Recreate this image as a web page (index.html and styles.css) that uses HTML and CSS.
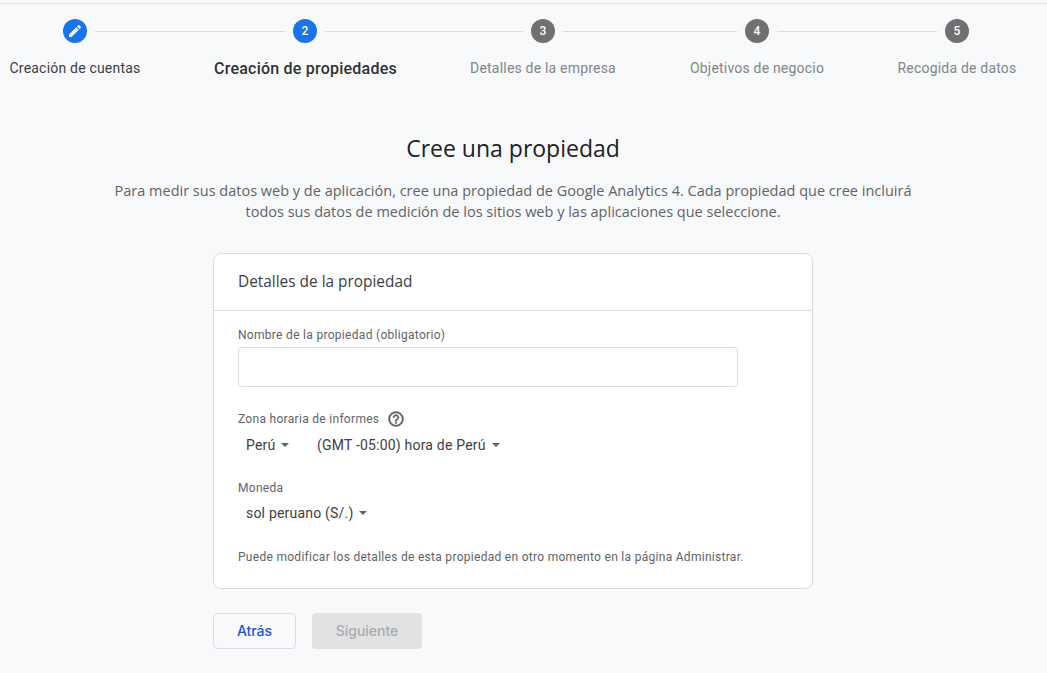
FILE: index.html
```html
<!DOCTYPE html>
<html lang="es">
<head>
    <meta charset="UTF-8">
    <title>Cree una propiedad</title>
    <link rel="stylesheet" href="styles.css">
</head>
<body>
    <div class="stepper">
        <div class="track">
            <span class="dot dot-active">
                <svg class="pencil" viewBox="0 0 24 24" width="16" height="16"><path d="M3 17.25V21h3.75L17.81 9.94l-3.75-3.75L3 17.25zM20.71 7.04a1 1 0 0 0 0-1.41l-2.34-2.34a1 1 0 0 0-1.41 0l-1.83 1.83 3.75 3.75 1.83-1.83z"/></svg>
            </span>
            <span class="line line-1"></span>
            <span class="dot dot-active">2</span>
            <span class="line line-2"></span>
            <span class="dot">3</span>
            <span class="line line-3"></span>
            <span class="dot">4</span>
            <span class="line line-4"></span>
            <span class="dot">5</span>
        </div>
        <div class="labels">
            <span class="label label-done">Creación de cuentas</span>
            <span class="label label-current">Creación de propiedades</span>
            <span class="label">Detalles de la empresa</span>
            <span class="label">Objetivos de negocio</span>
            <span class="label">Recogida de datos</span>
        </div>
    </div>

    <div class="intro">
        <h1>Cree una propiedad</h1>
        <p>Para medir sus datos web y de aplicación, cree una propiedad de Google Analytics 4. Cada propiedad que cree incluirá<br>todos sus datos de medición de los sitios web y las aplicaciones que seleccione.</p>
    </div>

    <div class="main">
        <div class="card">
            <div class="card-header">Detalles de la propiedad</div>
            <div class="card-body">
                <label class="field-label" for="nombre">Nombre de la propiedad (obligatorio)</label>
                <input class="text-input" id="nombre" type="text">

                <div class="field-label tz-label">
                    Zona horaria de informes
                    <svg class="help" viewBox="0 0 24 24" width="18" height="18"><path d="M11 18h2v-2h-2v2zm1-16C6.48 2 2 6.48 2 12s4.48 10 10 10 10-4.48 10-10S17.52 2 12 2zm0 18c-4.41 0-8-3.59-8-8s3.59-8 8-8 8 3.59 8 8-3.59 8-8 8zm0-14c-2.21 0-4 1.79-4 4h2c0-1.1.9-2 2-2s2 .9 2 2c0 2-3 1.75-3 5h2c0-2.25 3-2.5 3-5 0-2.21-1.79-4-4-4z"/></svg>
                </div>
                <div class="selects">
                    <span class="select select-country">Perú<i class="caret"></i></span>
                    <span class="select">(GMT -05:00) hora de Perú<i class="caret"></i></span>
                </div>

                <div class="field-label currency-label">Moneda</div>
                <div class="selects">
                    <span class="select">sol peruano (S/.)<i class="caret"></i></span>
                </div>

                <p class="hint">Puede modificar los detalles de esta propiedad en otro momento en la página Administrar.</p>
            </div>
        </div>

        <div class="actions">
            <button class="btn btn-back">Atrás</button>
            <button class="btn btn-next" disabled>Siguiente</button>
        </div>
    </div>
</body>
</html>
```

FILE: styles.css
```css
html, body {
    height: 100%;
}
body {
    margin: 0;
    background: #f8f9fa;
    border-top: 3px solid transparent;
    box-sizing: border-box;
    box-shadow: inset 0 1px 0 #e0e0e0;
    overflow: hidden;
    font-family: Roboto, Arial, sans-serif;
    color: #3c4043;
}
.stepper {
    padding-top: 16px;
}
.track {
    display: flex;
    align-items: center;
    padding-left: 63px;
}
.dot {
    display: flex;
    align-items: center;
    justify-content: center;
    flex: none;
    width: 24px;
    height: 24px;
    border-radius: 50%;
    background: #707070;
    color: #fff;
    font-size: 12px;
    font-weight: 500;
}
.dot-active {
    background: #1a73e8;
}
.pencil {
    fill: #fff;
}
.line {
    flex: none;
    height: 1px;
    margin: 0 8px;
    background: #dadce0;
}
.line-1 { width: 190px; }
.line-2 { width: 198px; }
.line-3 { width: 174px; }
.line-4 { width: 160px; }
.labels {
    display: grid;
    grid-template-columns: 150px 311px 164px 264px 136px;
    margin-top: 15px;
}
.label {
    text-align: center;
    font-size: 14px;
    line-height: 20px;
    letter-spacing: 0.2px;
    color: #80868b;
    white-space: nowrap;
}
.label-done {
    color: #3c4043;
}
.label-current {
    color: #303134;
    font-size: 16px;
    font-weight: 500;
    letter-spacing: 0.22px;
    line-height: 22px;
}
.intro {
    text-align: center;
    width: 1026px;
}
.intro h1 {
    margin: 52px 0 0 0;
    font-family: "Open Sans", Arial, sans-serif;
    font-size: 23px;
    line-height: 32px;
    font-weight: 400;
    color: #202124;
}
.intro p {
    margin: 16px 0 0 0;
    font-family: "Open Sans", Arial, sans-serif;
    font-size: 14.5px;
    line-height: 21px;
    font-weight: 500;
    color: #5f6368;
}
.main {
    width: 600px;
    margin: 31px 0 0 213px;
}
.card {
    background: #fff;
    border: 1px solid #dadce0;
    border-radius: 8px;
    box-sizing: border-box;
    height: 336px;
}
.card-header {
    height: 56px;
    line-height: 56px;
    padding: 0 24px;
    border-bottom: 1px solid #dadce0;
    font-family: "Open Sans", Arial, sans-serif;
    font-size: 15.4px;
    color: #3c4043;
}
.card-body {
    padding: 16px 24px 0 24px;
}
.field-label {
    display: block;
    font-size: 12px;
    line-height: 16px;
    letter-spacing: 0.3px;
    color: #5f6368;
}
.text-input {
    display: block;
    box-sizing: border-box;
    width: 500px;
    height: 40px;
    margin-top: 4px;
    border: 1px solid #dadce0;
    border-radius: 4px;
    background: #fff;
}
.tz-label {
    display: flex;
    align-items: center;
    gap: 8px;
    margin-top: 23px;
}
.help {
    fill: #5f6368;
    stroke: #5f6368;
    stroke-width: 0.6;
}
.selects {
    display: flex;
    margin-top: 7px;
    padding-left: 8px;
}
.select {
    display: flex;
    align-items: center;
    font-size: 14px;
    line-height: 20px;
    letter-spacing: 0.2px;
    color: #3c4043;
}
.select-country {
    width: 71px;
}
.caret {
    width: 0;
    height: 0;
    margin-left: 6px;
    border-left: 4px solid transparent;
    border-right: 4px solid transparent;
    border-top: 4px solid #5f6368;
}
.currency-label {
    margin-top: 25px;
}
.hint {
    margin: 26px 0 0 0;
    font-size: 12px;
    line-height: 16px;
    letter-spacing: 0.29px;
    color: #5f6368;
}
.actions {
    display: flex;
    gap: 16px;
    margin-top: 24px;
}
.btn {
    height: 36px;
    box-sizing: border-box;
    padding-bottom: 2px;
    border-radius: 4px;
    font-family: Inter, Arial, sans-serif;
    font-size: 14px;
    font-weight: 500;
}
.btn-back {
    width: 83px;
    background: #f8f9fa;
    border: 1px solid #dadce0;
    color: #1a55d8;
}
.btn-next {
    width: 110px;
    background: #e1e2e4;
    border: none;
    color: #a9abae;
}
```
